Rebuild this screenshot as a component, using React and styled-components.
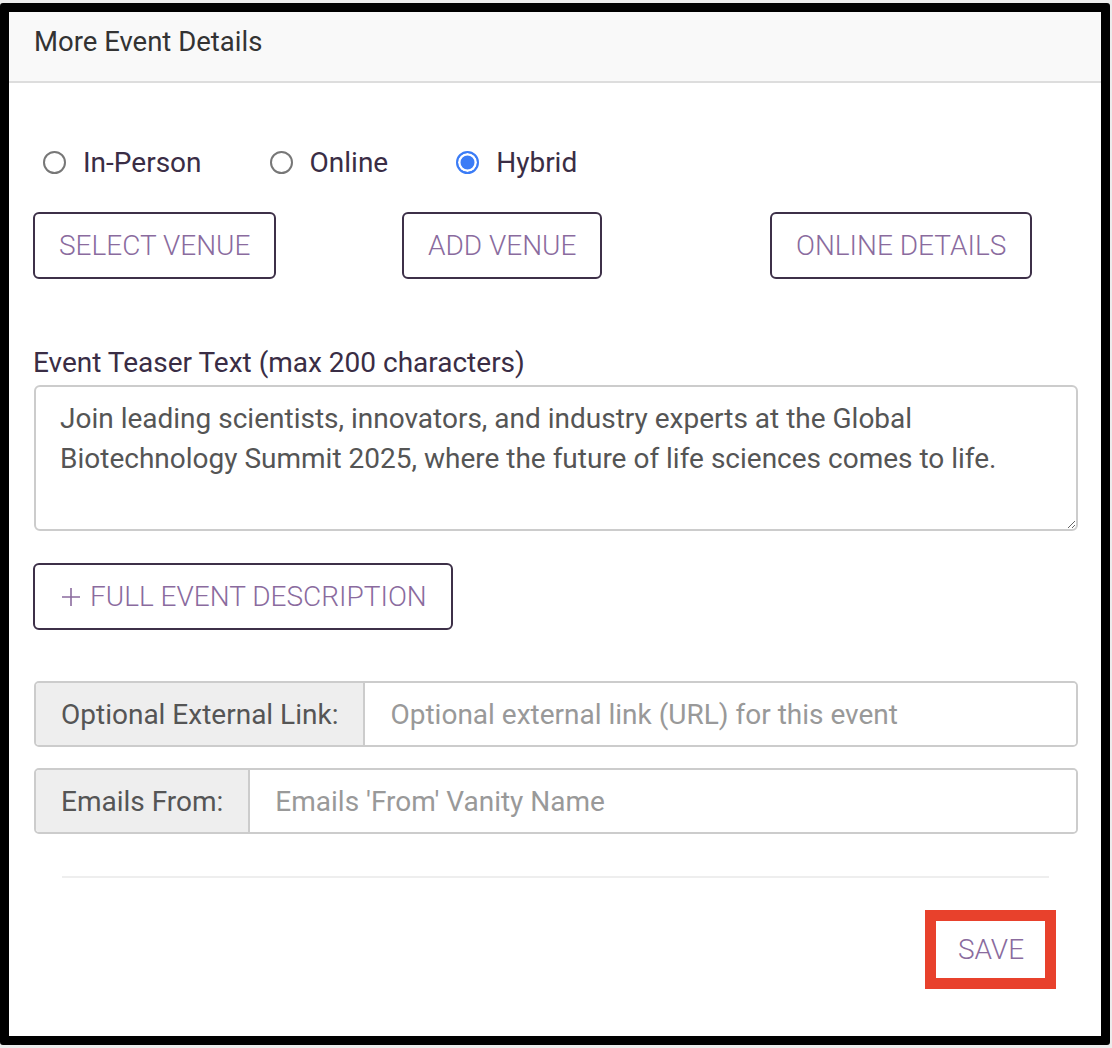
import React, { useState } from 'react';
import styled, { createGlobalStyle } from 'styled-components';

const GlobalStyle = createGlobalStyle`
  html, body {
    margin: 0;
    padding: 0;
    background: #ececec;
  }
  body {
    font-family: Roboto, "Liberation Sans", Arial, sans-serif;
  }
  * {
    box-sizing: border-box;
  }
`;

const Frame = styled.div`
  margin-top: 3px;
  width: 1110px;
  height: 1042px;
  border: 9px solid #000;
  border-radius: 3px;
  background: #ffffff;
  display: flex;
  flex-direction: column;
`;

const Header = styled.div`
  height: 71px;
  background: #f9f9f9;
  border-bottom: 2px solid #dddddd;
  padding: 10px 25px 0;
  font-size: 27.5px;
  line-height: 40px;
  color: #333333;
`;

const Body = styled.div`
  padding: 59px 23px 0 24px;
  display: flex;
  flex-direction: column;
`;

const RadioRow = styled.div`
  display: flex;
  align-items: center;
  height: 40px;
  padding-left: 10px;
  gap: 68px;
`;

const RadioItem = styled.label`
  display: flex;
  align-items: center;
  gap: 17px;
  font-size: 28px;
  color: #3a2d45;
  cursor: pointer;
`;

const RadioInput = styled.input`
  appearance: none;
  margin: 0;
  width: 23px;
  height: 23px;
  border-radius: 50%;
  border: 2px solid ${props => (props.checked ? '#3b7cf6' : '#777777')};
  background: ${props => (props.checked ? '#3b7cf6' : '#ffffff')};
  box-shadow: ${props => (props.checked ? 'inset 0 0 0 2.5px #ffffff' : 'none')};
  cursor: pointer;
`;

const ButtonGrid = styled.div`
  display: grid;
  grid-template-columns: 369px 368px auto;
  margin-top: 30px;
  justify-items: start;
`;

const OutlineButton = styled.button`
  position: relative;
  height: 67px;
  padding: 0 24px;
  border: 2px solid #3d3048;
  border-radius: 6px;
  background: #ffffff;
  color: #8a6b9e;
  font-family: Roboto, "Liberation Sans", Arial, sans-serif;
  font-size: 28px;
  font-weight: 300;
  text-transform: uppercase;
  display: inline-flex;
  align-items: center;
  gap: 9px;
  cursor: pointer;
`;

const FieldLabel = styled.div`
  margin-top: 64px;
  font-size: 28px;
  line-height: 40px;
  color: #3a2d45;
`;

const TeaserArea = styled.textarea`
  margin: 2px 0 0 1px;
  width: calc(100% - 1px);
  height: 146px;
  padding: 12px 24px;
  border: 2px solid #cccccc;
  border-radius: 6px;
  font-family: Roboto, "Liberation Sans", Arial, sans-serif;
  font-size: 28px;
  line-height: 40px;
  color: #555555;
  resize: vertical;
  outline: none;
`;

const DescRow = styled.div`
  margin-top: 32px;
`;

const InputGroup = styled.div`
  display: flex;
  height: 66px;
  margin-left: 1px;
  margin-top: ${props => props.$top}px;
  border: 2px solid #cccccc;
  border-radius: 5px;
  overflow: hidden;
`;

const Addon = styled.div`
  display: flex;
  align-items: center;
  padding: 0 25px;
  background: #eeeeee;
  border-right: 2px solid #cccccc;
  font-size: 28px;
  color: #555555;
  white-space: nowrap;
`;

const TextInput = styled.input`
  flex: 1;
  border: none;
  outline: none;
  padding: 0 25px;
  font-family: Roboto, "Liberation Sans", Arial, sans-serif;
  font-size: 28px;
  color: #555555;
  &::placeholder {
    color: #999999;
  }
`;

const Footer = styled.div`
  margin: 42px 29px 0 29px;
  padding-top: 38px;
  border-top: 2px solid #eeeeee;
  display: flex;
  justify-content: flex-end;
`;

const SaveButton = styled(OutlineButton)`
  width: 118px;
  justify-content: center;
  margin-right: -1px;

  /* red highlight frame drawn over the button */
  &::after {
    content: '';
    position: absolute;
    top: -8px;
    left: -9px;
    right: -8px;
    bottom: -8px;
    border: 11px solid #e8412c;
    pointer-events: none;
  }
`;

const PlusIcon = () => (
  <svg width="22" height="20" viewBox="0 0 22 20" fill="none">
    <path d="M12 1v18M3 10h18" stroke="#8a6b9e" strokeWidth="1.6" />
  </svg>
);

const App = () => {
  const [mode, setMode] = useState('hybrid');
  const modes = [
    { id: 'inperson', label: 'In-Person' },
    { id: 'online', label: 'Online' },
    { id: 'hybrid', label: 'Hybrid' }
  ];

  return (
    <>
      <GlobalStyle />
      <Frame>
        <Header>More Event Details</Header>
        <Body>
          <RadioRow>
            {modes.map(m => (
              <RadioItem key={m.id}>
                <RadioInput
                  type="radio"
                  name="mode"
                  checked={mode === m.id}
                  onChange={() => setMode(m.id)}
                />
                {m.label}
              </RadioItem>
            ))}
          </RadioRow>

          <ButtonGrid>
            <OutlineButton>Select Venue</OutlineButton>
            <OutlineButton>Add Venue</OutlineButton>
            <OutlineButton>Online Details</OutlineButton>
          </ButtonGrid>

          <FieldLabel>Event Teaser Text (max 200 characters)</FieldLabel>
          <TeaserArea
            defaultValue="Join leading scientists, innovators, and industry experts at the Global Biotechnology Summit 2025, where the future of life sciences comes to life."
          />

          <DescRow>
            <OutlineButton>
              <PlusIcon />
              Full Event Description
            </OutlineButton>
          </DescRow>

          <InputGroup $top={51}>
            <Addon>Optional External Link:</Addon>
            <TextInput placeholder="Optional external link (URL) for this event" />
          </InputGroup>
          <InputGroup $top={21}>
            <Addon>Emails From:</Addon>
            <TextInput placeholder="Emails 'From' Vanity Name" />
          </InputGroup>

          <Footer>
            <SaveButton>Save</SaveButton>
          </Footer>
        </Body>
      </Frame>
    </>
  );
};

export default App;
